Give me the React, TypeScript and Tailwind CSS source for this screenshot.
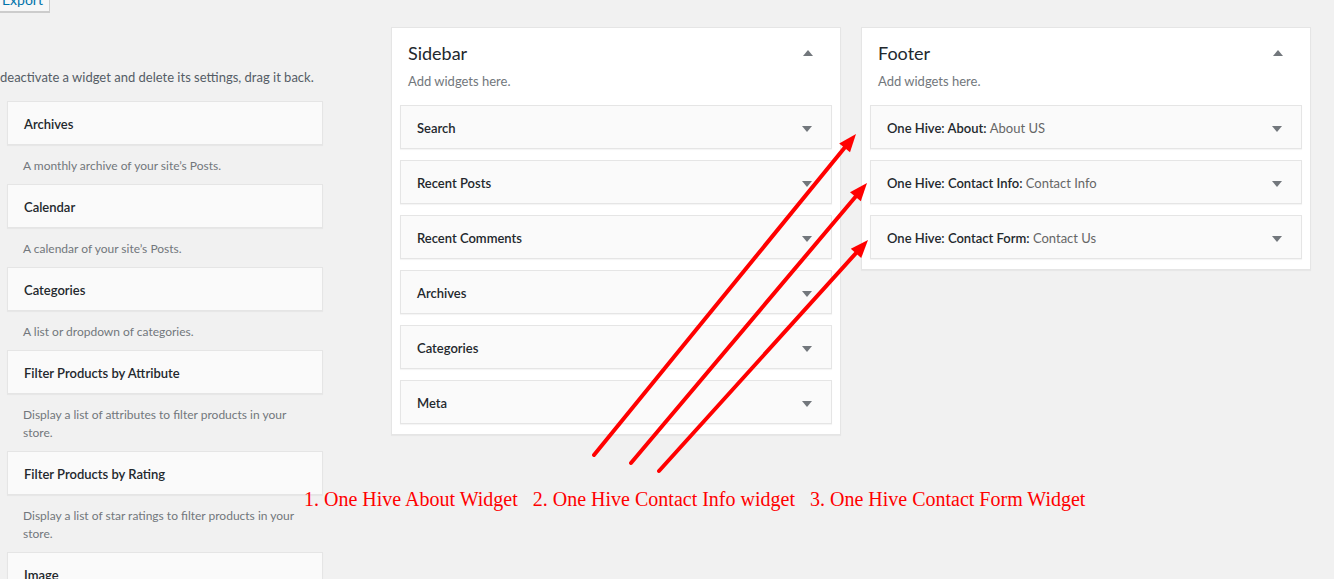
import React from 'react';

const font = { fontFamily: 'Lato, "Open Sans", Arial, sans-serif' };

const available = [
  { title: 'Archives', desc: "A monthly archive of your site’s Posts." },
  { title: 'Calendar', desc: "A calendar of your site’s Posts." },
  { title: 'Categories', desc: 'A list or dropdown of categories.' },
  { title: 'Filter Products by Attribute', desc: 'Display a list of attributes to filter products in your store.' },
  { title: 'Filter Products by Rating', desc: 'Display a list of star ratings to filter products in your store.' },
  { title: 'Image', desc: '' },
];

const sidebarWidgets = ['Search', 'Recent Posts', 'Recent Comments', 'Archives', 'Categories', 'Meta'];

const footerWidgets = [
  { name: 'One Hive: About:', title: 'About US' },
  { name: 'One Hive: Contact Info:', title: 'Contact Info' },
  { name: 'One Hive: Contact Form:', title: 'Contact Us' },
];

const Caret = ({ up = false }: { up?: boolean }) => (
  <svg width="10" height="6" viewBox="0 0 10 6" className="shrink-0">
    {up ? <polygon points="0,6 10,6 5,0" fill="#72777c" /> : <polygon points="0,0 10,0 5,6" fill="#72777c" />}
  </svg>
);

const WidgetRow = ({ children }: { children: React.ReactNode }) => (
  <div className="h-[44px] flex items-center justify-between pl-[16px] pr-[19px] pt-[3px] bg-[#fafafa] border border-[#e5e5e5] shadow-[0_1px_1px_rgba(0,0,0,0.04)] text-[13px] text-[#23282d] font-semibold">
    {children}
  </div>
);

const Panel = ({ title, children }: { title: string; children: React.ReactNode }) => (
  <div className="w-[450px] bg-white border border-[#e5e5e5] shadow-[0_1px_1px_rgba(0,0,0,0.04)] px-[8px] pb-[10px]">
    <div className="flex items-center justify-between pl-[8px] pr-[19px] pt-[13px]">
      <h2 className="text-[18px] leading-[24px] text-[#23282d]">{title}</h2>
      <Caret up />
    </div>
    <p className="pl-[8px] mt-[7px] mb-[15px] text-[13px] leading-[18px] text-[#72777c]">Add widgets here.</p>
    <div className="flex flex-col gap-[11px]">{children}</div>
  </div>
);

export default function App() {
  return (
    <div className="relative w-[1334px] h-[579px] overflow-hidden bg-[#f1f1f1]" style={font}>
      <div className="flex items-start">
        {/* available widgets */}
        <div className="w-[323px] shrink-0">
          <div className="-mt-[16px] ml-[-8px] w-[58px] h-[28px] border border-[#ccc] bg-[#f7f7f7] flex items-end justify-end pr-[6px] pb-[2px] text-[14px] text-[#0073aa] leading-[18px] shadow-[0_1px_0_#ccc]">
            Export
          </div>
          <p className="mt-[56px] text-[13px] leading-[18px] text-[#555d66] whitespace-nowrap">deactivate a widget and delete its settings, drag it back.</p>
          <div className="ml-[7px] mt-[15px]">
            {available.map((w) => (
              <div key={w.title}>
                <div className="h-[44px] flex items-center pl-[16px] pt-[3px] bg-[#fafafa] border border-[#e5e5e5] shadow-[0_1px_1px_rgba(0,0,0,0.04)] text-[13px] font-semibold text-[#23282d]">
                  {w.title}
                </div>
                <p className="pl-[16px] pr-[20px] pt-[12px] pb-[9px] text-[12px] leading-[18px] text-[#72777c]">{w.desc}</p>
              </div>
            ))}
          </div>
        </div>

        {/* sidebars */}
        <div className="ml-[68px] mt-[27px] flex items-start gap-[20px]">
          <Panel title="Sidebar">
            {sidebarWidgets.map((w) => (
              <WidgetRow key={w}>
                <span>{w}</span>
                <Caret />
              </WidgetRow>
            ))}
          </Panel>
          <Panel title="Footer">
            {footerWidgets.map((w) => (
              <WidgetRow key={w.name}>
                <span>
                  {w.name} <span className="font-normal text-[#666]">{w.title}</span>
                </span>
                <Caret />
              </WidgetRow>
            ))}
          </Panel>
        </div>
      </div>

      {/* annotation arrows */}
      <svg className="absolute inset-0 pointer-events-none" width="1334" height="579">
        <g stroke="#ff0000" strokeWidth="4" strokeLinecap="round">
          <line x1="594" y1="455" x2="846" y2="146" />
          <line x1="631" y1="463" x2="857" y2="195" />
          <line x1="659" y1="471" x2="857" y2="252" />
        </g>
        <g fill="#ff0000">
          <polygon points="856,134 850,152.3 839.2,143.5" />
          <polygon points="867,183 860.8,201.3 850,192.3" />
          <polygon points="868,240 861.2,258.1 850.8,248.7" />
        </g>
      </svg>

      <p
        className="absolute left-[304px] top-[486px] text-[20px] leading-[26px] text-[#ff0000] whitespace-pre"
        style={{ fontFamily: '"Liberation Serif", "Times New Roman", serif' }}
      >
        {'1. One Hive About Widget   2. One Hive Contact Info widget   3. One Hive Contact Form Widget'}
      </p>
    </div>
  );
}
